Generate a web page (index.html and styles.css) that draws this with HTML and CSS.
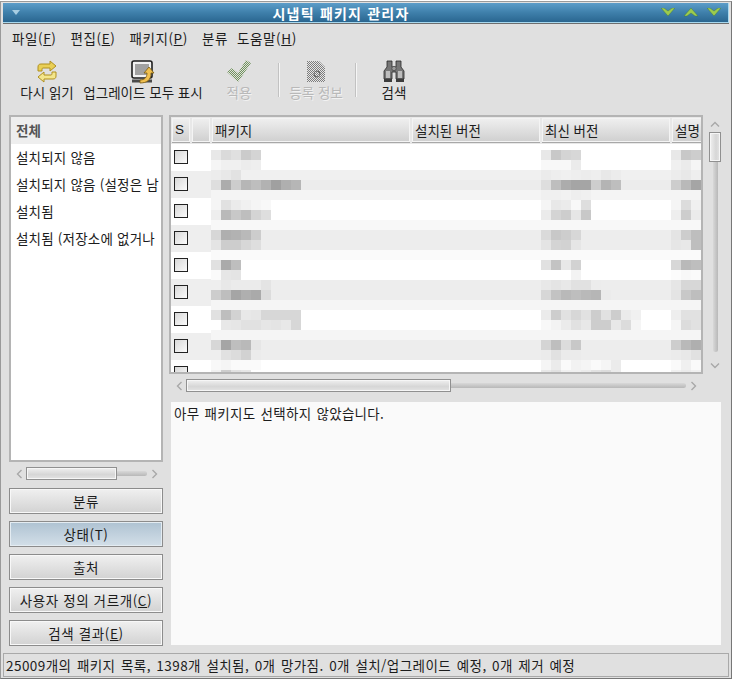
FILE: index.html
```html
<!DOCTYPE html>
<html lang="ko">
<head>
    <meta charset="UTF-8">
    <title>시냅틱 패키지 관리자</title>
    <link rel="stylesheet" href="styles.css">
</head>
<body>
    <svg class="defs" width="0" height="0">
        <defs>
            <pattern id="dither" width="2" height="2" patternUnits="userSpaceOnUse">
                <rect width="2" height="2" fill="#dfe3d8"/>
                <rect width="1" height="1" fill="#6f8f5f"/>
                <rect x="1" y="1" width="1" height="1" fill="#6f8f5f"/>
            </pattern>
            <pattern id="ditherGrey" width="2" height="2" patternUnits="userSpaceOnUse">
                <rect width="2" height="2" fill="#e6e6e6"/>
                <rect width="1" height="1" fill="#7c7c7c"/>
                <rect x="1" y="1" width="1" height="1" fill="#7c7c7c"/>
            </pattern>
            <symbol id="chevLeft" viewBox="0 0 7 10"><path d="M5.5 1L1.5 5l4 4" fill="none" stroke="#a8a8a8" stroke-width="1.4"/></symbol>
            <symbol id="chevRight" viewBox="0 0 7 10"><path d="M1.5 1l4 4-4 4" fill="none" stroke="#a8a8a8" stroke-width="1.4"/></symbol>
            <symbol id="chevUp" viewBox="0 0 10 7"><path d="M1 5.5l4-4 4 4" fill="none" stroke="#a8a8a8" stroke-width="1.4"/></symbol>
            <symbol id="chevDown" viewBox="0 0 10 7"><path d="M1 1.5l4 4 4-4" fill="none" stroke="#a8a8a8" stroke-width="1.4"/></symbol>
        </defs>
    </svg>

    <div class="window">
        <header class="titlebar">
            <svg class="title-menu" width="10" height="6" viewBox="0 0 10 6"><path d="M1 0h8L5 5z" fill="#a8cde2"/></svg>
            <h1>시냅틱 패키지 관리자</h1>
            <div class="title-buttons">
                <svg width="14" height="9" viewBox="0 0 14 9"><path d="M0 0l3 0 4 3 4-3 3 0-7 8z" fill="#9ccb4e" stroke="#3b6f3a" stroke-width=".4"/></svg>
                <svg width="14" height="9" viewBox="0 0 14 9"><path d="M0 8l3 0 4-3 4 3 3 0-7-8z" fill="#9ccb4e" stroke="#3b6f3a" stroke-width=".4"/></svg>
                <svg width="14" height="9" viewBox="0 0 14 9"><path d="M0 0l3 0 4 3 4-3 3 0-7 8z" fill="#9ccb4e" stroke="#3b6f3a" stroke-width=".4"/></svg>
            </div>
        </header>

        <nav class="menubar">
            <span>파일(<u>F</u>)</span>
            <span>편집(<u>E</u>)</span>
            <span>패키지(<u>P</u>)</span>
            <span class="menu-short">분류</span>
            <span>도움말(<u>H</u>)</span>
        </nav>

        <div class="toolbar">
            <div class="tool tool-reload">
                <svg width="24" height="24" viewBox="0 0 24 24">
                    <path d="M3 11V7c0-2 1-3 3-3h9V1l6 5-6 5V8H8c-1 0-1 1-1 3z" fill="#e9cf55" stroke="#b0901f"/>
                    <path d="M21 12v4c0 2-1 3-3 3H9v3l-6-5 6-5v3h7c1 0 1-1 1-3z" fill="#f3e68c" stroke="#b0901f"/>
                </svg>
                <span>다시 읽기</span>
            </div>
            <div class="tool tool-upgrade">
                <svg width="24" height="24" viewBox="0 0 24 24">
                    <rect x="1" y="1" width="20" height="17" rx="2" fill="#f2f2f2" stroke="#1e1e1e" stroke-width="1.6"/>
                    <rect x="4" y="4" width="14" height="11" fill="#a2a2a2"/>
                    <path d="M1 19.5h20v3H1z" fill="#4a4a4a"/>
                    <path d="M9 20c5 0 7-3 7-7h-3l5-6 5 6h-3c0 7-4 10-11 10z" fill="#f0c050" stroke="#7a5a10" stroke-width=".8"/>
                </svg>
                <span>업그레이드 모두 표시</span>
            </div>
            <div class="tool tool-apply disabled">
                <svg width="24" height="24" viewBox="0 0 24 24">
                    <path d="M0 12l5-4 6 5L19 0l5 3-13 19z" fill="url(#dither)"/>
                </svg>
                <span>적용</span>
            </div>
            <i class="tool-sep sep-one"></i>
            <div class="tool tool-props disabled">
                <svg width="24" height="24" viewBox="0 0 24 24">
                    <path d="M3 1h12l6 6v15H3z" fill="url(#ditherGrey)"/>
                    <circle cx="13" cy="14" r="3" fill="none" stroke="#666" stroke-width="1"/>
                </svg>
                <span>등록 정보</span>
            </div>
            <i class="tool-sep sep-two"></i>
            <div class="tool tool-search">
                <svg width="24" height="24" viewBox="0 0 24 24">
                    <path d="M5 1h5v6h4V1h5v6l3 4v8h-8v-7h-4v7H2v-8l3-4z" fill="#767676" stroke="#2a2a2a" stroke-width=".8"/>
                    <path d="M4 11h4v7H4zM16 11h4v7h-4z" fill="#bdbdbd"/>
                    <circle cx="12" cy="8.5" r="2.2" fill="#9a9a9a" stroke="#333" stroke-width=".6"/>
                    <path d="M2 19h8v3H2zM14 19h8v3h-8z" fill="#3c3c3c"/>
                </svg>
                <span>검색</span>
            </div>
        </div>

        <div class="content">
            <aside class="sidebar">
                <ul class="filter-list">
                    <li class="selected">전체</li>
                    <li>설치되지 않음</li>
                    <li>설치되지 않음 (설정은 남</li>
                    <li>설치됨</li>
                    <li>설치됨 (저장소에 없거나</li>
                </ul>
                <div class="hscroll side-scroll">
                    <svg class="arrow"><use href="#chevLeft"/></svg>
                    <div class="trough"><div class="thumb"></div></div>
                    <svg class="arrow"><use href="#chevRight"/></svg>
                </div>
                <div class="side-buttons">
                    <button>분류</button>
                    <button class="active">상태(T)</button>
                    <button>출처</button>
                    <button>사용자 정의 거르개(<u>C</u>)</button>
                    <button>검색 결과(<u>E</u>)</button>
                </div>
            </aside>

            <main class="main">
                <div class="table-area">
                    <div class="table">
                        <div class="thead">
                            <div class="th col-s">S</div>
                            <div class="th col-blank"></div>
                            <div class="th col-name">패키지</div>
                            <div class="th col-ver">설치된 버전</div>
                            <div class="th col-ver">최신 버전</div>
                            <div class="th col-desc">설명</div>
                        </div>
                        <div class="tbody" id="tbody">
                            <div class="mosaic" id="mosaic"></div>
                        </div>
                    </div>
                    <div class="vscroll">
                        <svg class="varrow varrow-up"><use href="#chevUp"/></svg>
                        <div class="vtrough"><div class="vthumb"></div></div>
                        <svg class="varrow varrow-down"><use href="#chevDown"/></svg>
                    </div>
                </div>
                <div class="hscroll main-scroll">
                    <svg class="arrow"><use href="#chevLeft"/></svg>
                    <div class="trough"><div class="thumb"></div></div>
                    <svg class="arrow"><use href="#chevRight"/></svg>
                </div>
                <div class="details">아무 패키지도 선택하지 않았습니다.</div>
            </main>
        </div>

        <footer class="statusbar">25009개의 패키지 목록, 1398개 설치됨, 0개 망가짐. 0개 설치/업그레이드 예정, 0개 제거 예정</footer>
    </div>

    <script src="script.js"></script>
</body>
</html>
```

FILE: styles.css
```css
* {
    box-sizing: border-box;
}
html, body {
    margin: 0;
    height: 100%;
    overflow: hidden;
}
body {
    font-family: "Noto Sans CJK KR", "Noto Sans", sans-serif;
    font-size: 13.5px;
    color: #1c1c1c;
    background-color: #fff;
}
.defs {
    position: absolute;
}
.window {
    height: 678px;
    margin-top: 1px;
    display: flex;
    flex-direction: column;
    background-color: #e0e0e0;
    border: 1px solid #9a9a9a;
    border-right-color: #777;
    border-bottom-color: #777;
    padding: 1px 2px 1px 2px;
}

/* title bar */
.titlebar {
    height: 20px;
    flex: none;
    display: flex;
    align-items: center;
    padding: 0 8px;
    background: linear-gradient(#5c9dc9, #3f80ab 50%, #2a6690);
    border-bottom: 1px solid #a8d8ee;
    border-right: 1px solid #a8d8ee;
    box-shadow: 0 1px 0 #6e6e6e;
}
.titlebar h1 {
    flex: 1;
    margin: 0;
    text-align: center;
    font-size: 14px;
    font-weight: 700;
    letter-spacing: 1.2px;
    color: #fff;
    line-height: 18px;
}
.title-buttons {
    display: flex;
    gap: 9px;
    margin-right: -1px;
}
.title-buttons svg, .title-menu {
    display: block;
}

/* menu */
.menubar {
    flex: none;
    height: 29px;
    display: flex;
    align-items: center;
    padding-left: 9px;
    gap: 14px;
    line-height: 18px;
    letter-spacing: .6px;
}
.menubar span {
    white-space: nowrap;
}
.menu-short {
    margin-right: -5px;
}

/* toolbar */
.toolbar {
    flex: none;
    height: 63px;
    display: flex;
    align-items: flex-start;
    padding-top: 8px;
}
.tool {
    display: flex;
    flex-direction: column;
    align-items: center;
    white-space: nowrap;
    line-height: 16px;
}
.tool svg {
    display: block;
    flex: none;
}
.tool-reload {
    width: 56px;
    margin-left: 16px;
}
.tool-upgrade {
    width: 120px;
    margin-left: 8px;
}
.tool-apply {
    width: 30px;
    margin-left: 21px;
}
.tool-props {
    width: 56px;
    margin-left: 9px;
}
.tool-search {
    width: 30px;
    margin-left: 23px;
}
.disabled {
    color: #b9b9b9;
    text-shadow: 1px 1px 0 #f2f2f2;
}
.tool-sep {
    width: 1px;
    height: 34px;
    margin-top: 3px;
    background-color: #c2c2c2;
    box-shadow: 1px 0 0 #f6f6f6;
}
.sep-one {
    margin-left: 24px;
}
.sep-two {
    margin-left: 11px;
}

/* content */
.content {
    flex: 1;
    min-height: 0;
    display: flex;
    padding: 0 8px 0 6px;
    gap: 6px;
}
.sidebar {
    width: 154px;
    flex: none;
    display: flex;
    flex-direction: column;
}
.filter-list {
    list-style: none;
    margin: 0;
    padding: 0;
    height: 347px;
    flex: none;
    background-color: #fff;
    border: 2px solid #b4b4b4;
    overflow: hidden;
    letter-spacing: .2px;
}
.filter-list li {
    height: 27px;
    line-height: 27px;
    padding-left: 5px;
    white-space: nowrap;
}
.filter-list .selected {
    background-color: #eeeeee;
    color: #555;
    font-weight: 700;
}

/* scrollbars */
.hscroll {
    display: flex;
    align-items: center;
    flex: none;
    height: 23px;
}
.arrow {
    flex: none;
    width: 7px;
    height: 10px;
    margin: 0 3px 0 4px;
}
.trough {
    flex: 1;
    height: 5px;
    background: linear-gradient(#d8d8d8, #b8b8b8);
    border-radius: 3px;
    display: flex;
    align-items: center;
}
.thumb {
    height: 13px;
    flex: none;
    background: linear-gradient(#f0f0f0, #d6d6d6 60%, #e4e4e4);
    border: 1px solid #909090;
    box-shadow: inset 0 0 0 1px #f6f6f6;
}
.side-scroll {
    padding: 0 2px 0 3px;
}
.side-scroll .thumb {
    width: 91px;
}
.main-scroll {
    padding: 0 21px 0 3px;
}
.main-scroll .thumb {
    width: 265px;
}

/* filter buttons */
.side-buttons {
    display: flex;
    flex-direction: column;
    gap: 7px;
    margin-top: 3px;
}
.side-buttons button {
    height: 26px;
    padding: 0;
    font: inherit;
    color: inherit;
    letter-spacing: .6px;
    background: linear-gradient(#f0f0f0, #d2d2d2);
    border: 1px solid #8c8c8c;
    box-shadow: inset 0 0 0 1px #f8f8f8;
}
.side-buttons .active {
    background: linear-gradient(#aec2d2, #d3dfe8);
    box-shadow: inset 0 0 0 1px #e4ecf2;
}

/* main */
.main {
    flex: 1;
    min-width: 0;
    display: flex;
    flex-direction: column;
}
.table-area {
    flex: none;
    height: 259px;
    display: flex;
}
.table {
    width: 534px;
    flex: none;
    border: 2px solid #b4b4b4;
    display: flex;
    flex-direction: column;
    overflow: hidden;
}
.thead {
    flex: none;
    display: flex;
    height: 27px;
    padding: 1px 0 0 1px;
    gap: 2px;
    background-color: #e8e8e8;
}
.th {
    height: 25px;
    flex: none;
    padding-left: 3px;
    line-height: 24px;
    background: linear-gradient(#f0f0f0, #cfcfcf);
    border-bottom: 1px solid #a8a8a8;
    box-shadow: inset 0 0 0 1px #f4f4f4;
    white-space: nowrap;
    overflow: hidden;
}
.col-s {
    width: 18px;
    font-family: "Liberation Sans", sans-serif;
}
.col-blank {
    width: 18px;
}
.col-name {
    width: 198px;
}
.col-ver {
    width: 128px;
}
.col-desc {
    width: 31px;
}
.tbody {
    flex: 1;
    position: relative;
    overflow: hidden;
    background-color: #fff;
}
.row {
    height: 27px;
    padding: 6px 0 0 3px;
}
.row:nth-child(odd) {
    background-color: #eeeeee;
}
.check {
    display: block;
    width: 14px;
    height: 14px;
    border: 1px solid #222;
    background: linear-gradient(135deg, #d8d8d8, #fbfbfb);
}
.mosaic {
    position: absolute;
    left: 40px;
    top: 0;
    right: 0;
}
.band {
    height: 10px;
    position: relative;
}
.band-first {
    height: 6px;
}
.cells {
    position: absolute;
    top: 0;
    display: flex;
}
.cells i {
    display: block;
    width: 10px;
    height: 10px;
}
.vscroll {
    width: 18px;
    flex: none;
    margin-left: 3px;
    display: flex;
    flex-direction: column;
    align-items: center;
}
.varrow {
    flex: none;
    width: 10px;
    height: 7px;
}
.varrow-up {
    margin: 6px 0 4px;
}
.varrow-down {
    margin: 10px 0 5px;
}
.vtrough {
    flex: 1;
    width: 5px;
    background: linear-gradient(90deg, #d8d8d8, #b8b8b8);
    border-radius: 3px;
    display: flex;
    justify-content: center;
}
.vthumb {
    flex: none;
    width: 12px;
    height: 30px;
    background: linear-gradient(90deg, #f0f0f0, #d6d6d6 60%, #e4e4e4);
    border: 1px solid #909090;
    box-shadow: inset 0 0 0 1px #f6f6f6;
}
.details {
    flex: 1;
    margin: 5px 0 0 2px;
    padding: 2px 3px;
    line-height: 19px;
    letter-spacing: .3px;
    word-spacing: 1px;
    background-color: #fafafa;
}

/* status */
.statusbar {
    flex: none;
    height: 24px;
    margin-top: 8px;
    padding-left: 2px;
    line-height: 22px;
    letter-spacing: .45px;
    word-spacing: 1.2px;
    border: 1px solid #a9a9a9;
    white-space: nowrap;
    overflow: hidden;
}
```

FILE: script.js
```js
// rows of the package list (the names are blurred in the shot, so they are drawn as grey cells)
const ROW_COUNT = 9;

// each line is one 10px band: band colour, then cells for the name, latest version and description columns
const bands = [
    [255, [232, 218, 224, 203, 212], [232, 200, 212, 215], [232, 200, 205]],
    [255, [245, 240, 240, 236, 238], [248, 248, 248, 235], [240, 235, 245]],
    [240, [236, 232, 226], [235, 238, 240, 238, 236, 238, 232, 236], [236, 232, 238]],
    [236, [222, 172, 205, 182, 190, 178, 160, 175, 182], [222, 190, 172, 165, 165, 205, 180, 190], [205, 185, 165, 225]],
    [244, [], [240, 240, 242, 238, 240], []],
    [255, [245, 225, 235, 240, 245, 248], [245, 232, 235, 248, 222], [245, 220, 240]],
    [255, [238, 185, 200, 190, 212, 222], [235, 212, 205, 230, 200], [238, 205, 235, 215]],
    [248, [], [], []],
    [237, [215, 175, 178, 185, 205], [218, 200, 205, 215], [228, 205, 190]],
    [237, [228, 205, 205, 215, 222], [228, 212, 210, 230], [230, 232, 190]],
    [250, [], [], []],
    [255, [225, 170, 190], [225, 195, 232, 210], [215, 185, 190]],
    [255, [250, 230, 228], [255, 255, 255, 243], [252, 248, 250]],
    [237, [238, 232, 235, 235, 235, 228], [232, 228, 232, 225, 225, 236], [230, 215, 215]],
    [237, [205, 190, 165, 175, 170, 220], [215, 195, 185, 190, 185, 182, 235], [228, 200, 190]],
    [245, [], [], []],
    [255, [225, 190, 210, 232, 230, 215, 215, 215, 215], [235, 205, 225, 215, 225, 205, 225, 205, 235, 240], [238, 225, 225]],
    [255, [255, 232, 230, 225, 225, 230, 228, 232, 215], [248, 243, 235, 225, 232, 205, 205, 232, 220, 245], [245, 220, 225]],
    [245, [], [], []],
    [237, [215, 165, 190, 185, 230], [212, 190, 220, 200], [205, 185, 175]],
    [237, [238, 225, 220, 210, 235], [235, 225, 235, 235], [235, 232, 225]],
    [255, [248, 245, 250, 250, 250], [245, 235, 250, 242, 245, 250, 245, 235], [250, 240, 250]],
    [255, [240, 205, 225, 230], [232, 225, 240, 240, 235, 225, 220, 235], [240, 235, 240]]
];

// left edge of each blurred column, measured from the mosaic layer
const columnLeft = [0, 330, 460];

function grey(value) {
    return `rgb(${value}, ${value}, ${value})`;
}

function buildRows() {
    const tbody = document.getElementById('tbody');
    for (let i = 0; i < ROW_COUNT; i++) {
        const row = document.createElement('div');
        row.className = 'row';
        row.innerHTML = '<span class="check"></span>';
        tbody.appendChild(row);
    }
}

function buildMosaic() {
    const mosaic = document.getElementById('mosaic');
    const first = document.createElement('div');
    first.className = 'band-first';
    mosaic.appendChild(first);

    bands.forEach(line => {
        const band = document.createElement('div');
        band.className = 'band';
        band.style.backgroundColor = grey(line[0]);
        columnLeft.forEach((left, col) => {
            const cells = document.createElement('div');
            cells.className = 'cells';
            cells.style.left = left + 'px';
            line[col + 1].forEach(value => {
                const cell = document.createElement('i');
                cell.style.backgroundColor = grey(value);
                cells.appendChild(cell);
            });
            band.appendChild(cells);
        });
        mosaic.appendChild(band);
    });
}

buildRows();
buildMosaic();
```
